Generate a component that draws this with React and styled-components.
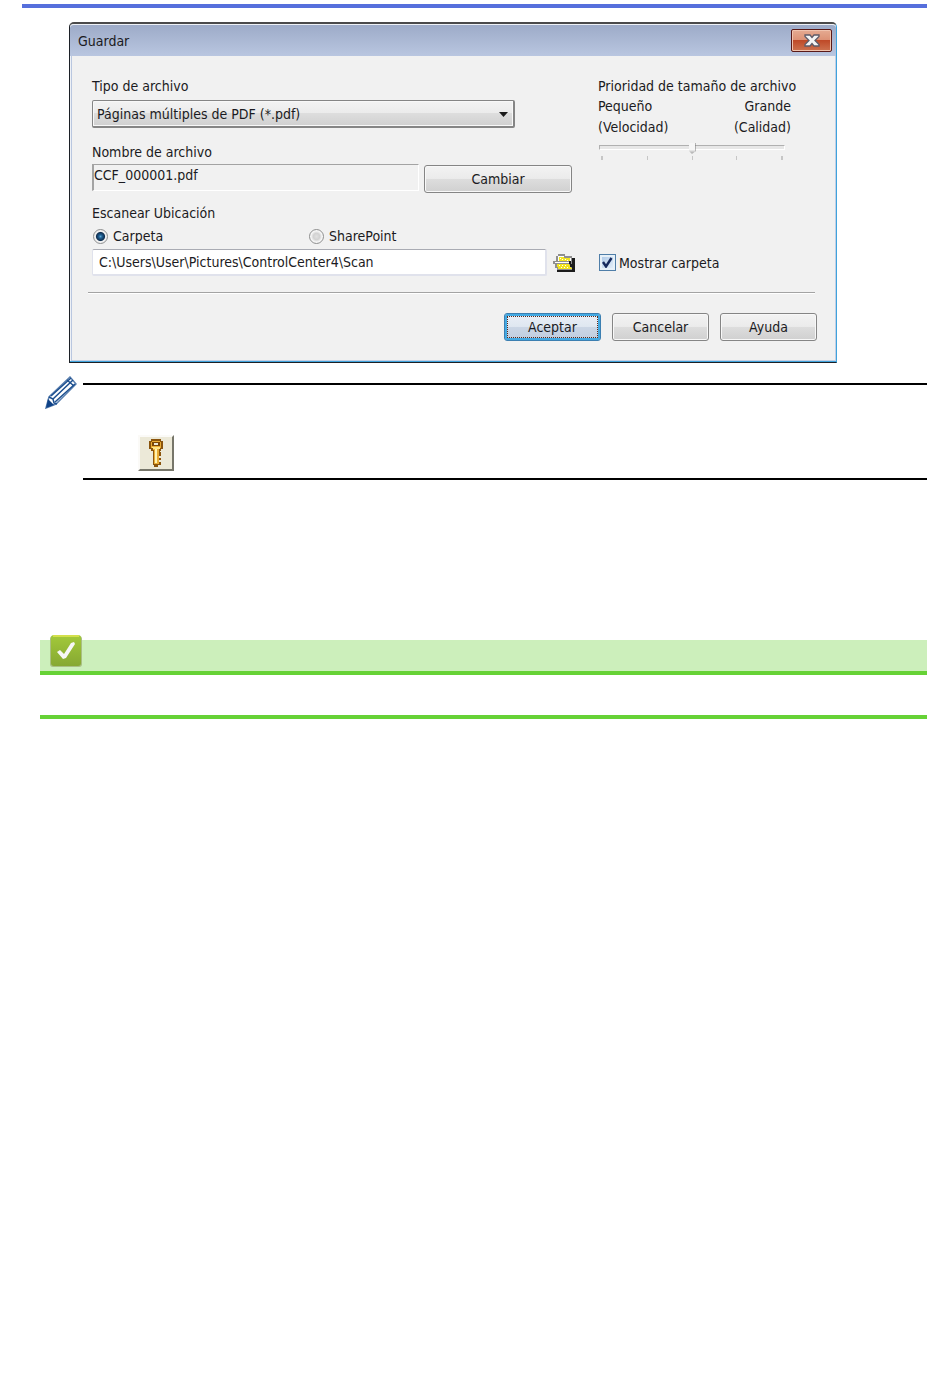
import React, { useState } from 'react';
import styled, { createGlobalStyle } from 'styled-components';

const GlobalStyle=createGlobalStyle`
    *{
        box-sizing:border-box;
    }
    body{
        margin:0;
        background:#ffffff;
        color:#1b1b22;
        font-family:Tahoma,"DejaVu Sans Condensed","DejaVu Sans",sans-serif;
        font-size:14px;
        line-height:20px;
    }
    button,input,select{
        font:inherit;
        color:inherit;
        margin:0;
    }
`;

const Page=styled.main`
    padding:4px 23px 40px 22px;
`;

const TopRule=styled.hr`
    height:4px;
    margin:0 0 14px;
    border:none;
    background:#566fdc;
`;

const Dialog=styled.section`
    max-width:768px;
    margin-left:47px;
    border:1px solid #1c2026;
    border-top:2px solid #4a4a4a;
    border-right:1px solid #3fa3dc;
    border-radius:5px 5px 0 0;
    background:#f1f1f1;
    box-shadow:inset 0 -1px 0 #3fa3dc,inset 1px 0 0 #eef1f6,inset -1px 0 0 #c3cfe4,inset 2px 0 0 #b9c7e0,inset 0 -2px 0 #c3cfe4;
`;

const TitleBar=styled.header`
    display:flex;
    align-items:flex-start;
    justify-content:space-between;
    height:32px;
    padding:4px 4px 0 8px;
    border-top:1px solid #eef1f6;
    border-radius:4px 4px 0 0;
    background:linear-gradient(#9dabc8,#b9c6e0);
`;

const Title=styled.h1`
    margin:2px 0 0;
    font-size:14px;
    font-weight:400;
    line-height:20px;
`;

const CloseButton=styled.button`
    display:grid;
    place-items:center;
    width:41px;
    height:23px;
    padding:0;
    border:1px solid #5a1a18;
    border-radius:2px;
    background:linear-gradient(#e5ab92,#dc9175 48%,#bf4a28 50%,#cd7350);
    box-shadow:inset 0 0 0 1px #f0c3ae;
`;

const Body=styled.form`
    padding:20px 19px 21px 22px;
`;

const Columns=styled.div`
    display:grid;
    grid-template-columns:506px 1fr;
`;

const Fields=styled.div`
    display:flex;
    flex-direction:column;
`;

const Label=styled.label`
    display:block;
    margin-top:${(props)=>props.$gap||0}px;
`;

const SelectWrap=styled.div`
    display:grid;
    align-items:center;
    width:423px;
    margin-top:4px;
    > *{
        grid-area:1/1;
    }
    svg{
        justify-self:end;
        margin-right:7px;
        pointer-events:none;
    }
`;

const Select=styled.select`
    appearance:none;
    width:100%;
    height:28px;
    padding:0 24px 0 4px;
    border:1px solid #858585;
    border-bottom-width:2px;
    border-right-width:2px;
    border-radius:2px;
    background:linear-gradient(#f3f3f3,#ebebeb 48%,#dddddd 50%,#d0d0d0);
    box-shadow:inset 0 0 0 1px #f8f8f8;
`;

const Row=styled.div`
    display:flex;
    align-items:${(props)=>props.$align||'center'};
    margin-top:${(props)=>props.$gap||0}px;
`;

const FileName=styled.input`
    width:327px;
    height:27px;
    margin-right:5px;
    padding:0 0 6px 0;
    border:1px solid #ffffff;
    border-top-color:#a3a3a3;
    border-left:2px solid #a3a3a3;
    background:#f1f1f1;
`;

const FileRow=styled(Row)`
    height:29px;
    button{
        align-self:flex-end;
    }
`;

const Button=styled.button`
    width:${(props)=>props.$wide?148:97}px;
    height:28px;
    padding:0;
    border:1px solid #858585;
    border-radius:3px;
    background:linear-gradient(#f3f3f3,#ebebeb 48%,#dddddd 50%,#d0d0d0);
    box-shadow:inset 0 0 0 1px #f8f8f8;
    ${(props)=>props.$primary&&`
        border-color:#3c7fb1;
        background:linear-gradient(#eaeff6,#dfe7f1 48%,#cbd6e5 50%,#c0cddf);
        box-shadow:inset 0 0 0 2px #43a9e2;
        outline:1px dotted #5c2a1c;
        outline-offset:-4px;
    `}
`;

const Choice=styled.label`
    display:flex;
    align-items:center;
    gap:5px;
    width:${(props)=>props.$width}px;
    padding-left:1px;
`;

const Radio=styled.input`
    appearance:none;
    width:15px;
    height:15px;
    border:1px solid #8e8f8f;
    border-radius:50%;
    background:radial-gradient(circle,#e0e0e0 0,#d2d2d2 35%,#f6f6f6 60%);
    &:checked{
        background:radial-gradient(circle at 50% 50%,#5fa8d2 0,#1f5f93 18%,#0f2f50 44%,#f1f1f1 55%);
    }
`;

const PathInput=styled.input`
    width:455px;
    height:27px;
    padding:0 6px;
    border:1px solid #e0e2ec;
    border-top-color:#a9abb3;
    border-bottom-width:2px;
    border-right-width:2px;
    border-radius:2px;
    background:#ffffff;
`;

const FolderButton=styled.button`
    display:flex;
    width:23px;
    height:20px;
    margin:0 23px 0 6px;
    padding:0;
    border:none;
    background:none;
`;

const CheckLabel=styled.label`
    display:flex;
    align-items:center;
    gap:3px;
`;

const CheckWrap=styled.span`
    display:grid;
    place-items:center;
    > *{
        grid-area:1/1;
    }
    svg{
        pointer-events:none;
    }
`;

const Checkbox=styled.input`
    appearance:none;
    width:17px;
    height:17px;
    border:1px solid #4f7ea8;
    background:linear-gradient(135deg,#a9c6e6,#e9f2fb);
    box-shadow:inset 0 0 0 2px #e6f0f8;
`;

const Priority=styled.div`
    display:flex;
    flex-direction:column;
`;

const Ends=styled.div`
    display:flex;
    justify-content:space-between;
    width:193px;
    line-height:21px;
    div:last-child{
        text-align:right;
    }
`;

const Slider=styled.input`
    appearance:none;
    width:186px;
    height:12px;
    margin:3px 0 3px 1px;
    background:none;
    &::-webkit-slider-runnable-track{
        height:5px;
        border:1px solid #ffffff;
        border-top-color:#b0b0b0;
        border-left-color:#b0b0b0;
        background:#e7e7e7;
    }
    &::-webkit-slider-thumb{
        appearance:none;
        width:7px;
        height:11px;
        margin-top:-3px;
        border-right:1px solid #777777;
        background:linear-gradient(#f6f6f6 60%,#9a9a9a);
        clip-path:polygon(0 0,100% 0,100% 80%,60% 100%,40% 100%,0 70%);
    }
`;

const Ticks=styled.div`
    display:flex;
    justify-content:space-between;
    width:182px;
    margin-left:3px;
`;

const Tick=styled.span`
    width:${(props)=>props.$end?2:1}px;
    height:4px;
    background:#c6c6c6;
`;

const Divider=styled.hr`
    height:2px;
    margin:16px 2px 19px -4px;
    border:none;
    border-top:1px solid #a3a3a3;
    border-bottom:1px solid #ffffff;
`;

const Actions=styled.div`
    display:flex;
    justify-content:flex-end;
    gap:11px;
`;

const Note=styled.aside`
    display:flex;
    align-items:flex-start;
    gap:6px;
    margin:13px 0 0 23px;
`;

const NoteBody=styled.div`
    flex:1;
    margin-top:7px;
    padding:50px 0 7px 55px;
    border-top:2px solid #000000;
    border-bottom:2px solid #000000;
`;

const KeyTile=styled.div`
    display:grid;
    place-items:center;
    width:36px;
    height:36px;
    border:2px solid #fbfaf7;
    border-right-color:#77766a;
    border-bottom-color:#77766a;
    background:#ece9d8;
`;

const Related=styled.section`
    margin:160px 0 0 18px;
    border-bottom:4px solid #66d236;
`;

const RelatedHead=styled.div`
    height:35px;
    margin-bottom:40px;
    padding-left:10px;
    border-bottom:4px solid #66d236;
    background:#ccefbb;
    svg{
        display:block;
        position:relative;
        top:-5px;
    }
`;

const CloseIcon=()=>(
    <svg width="16" height="13" viewBox="0 0 16 13" aria-hidden="true">
        <path d="M1 1h5l2 2.500 2-2.500h5v1.500L11 6.500l4 4V12h-5L8 9.500 6 12H1v-1.500l4-4-4-4z" fill="#f4f4f4" stroke="#5d5b68" strokeWidth="1.300"/>
    </svg>
);

const FolderIcon=()=>(
    <svg width="23" height="20" viewBox="0 0 23 20" shapeRendering="crispEdges" aria-hidden="true">
        <path d="M19 5h3v14H4v-2h15z" fill="#1c1c1c"/>
        <path d="M5 1h7v2h7v14H4v-2H2v-4H0V8h3V3h2z" fill="#8f8f8f"/>
        <path d="M5 3h6v2h7v3H5z" fill="#ffffff"/>
        <path d="M6 4h5v1h6v3H6z" fill="#f2e41f"/>
        <path d="M2 9h14v1H2z" fill="#ffffff"/>
        <path d="M4 11h12l3 5H5v-2H4z" fill="#f2e41f"/>
        <path d="M7 5h1v1H7zM9 6h1v1H9zM12 6h1v1h-1zM14 7h1v1h-1zM6 12h1v1H6zM9 12h1v1H9zM12 12h1v1h-1zM8 14h1v1H8zM11 14h1v1h-1zM14 14h1v1h-1z" fill="#ffffff"/>
        <path d="M16 8h2v3h1v3h-2v-3h-1z" fill="#1c1c1c"/>
    </svg>
);

const PencilIcon=()=>(
    <svg width="32" height="33" viewBox="0 0 32 33" aria-hidden="true">
        <path d="M1 32l3-11L25 1l6 7-20 20z" fill="#ffffff" stroke="#5c81b0" strokeWidth="1.500"/>
        <path d="M4 21l4 2 1 4 3 1M8 23L28 4M10 26L30 8M22 4l7 6M6 20L26 2" fill="none" stroke="#1c4f8f" strokeWidth="1.500"/>
        <path d="M1 32l2-9 6 6z" fill="#0f4287"/>
    </svg>
);

const KeyIcon=()=>(
    <svg width="14" height="28" viewBox="0 0 14 28" shapeRendering="crispEdges" aria-hidden="true">
        <path d="M2 0h10v2h2v8h-2v2h-1v1h1v4h-2v2h2v2h-2v2h2v3h-3v2H5v-2H4V12H2v-2H0V2h2z" fill="#8a540c"/>
        <path d="M3 2h8v1h1v6h-2v2H4V9H2V3h1z" fill="#e9ac35"/>
        <path d="M3 3h8v4H3z" fill="#7b4708"/>
        <path d="M5 4h4v2H5z" fill="#ece9d8"/>
        <path d="M3 8h8v2H4z" fill="#ffe486"/>
        <path d="M5 10h5v15H5z" fill="#e9ac35"/>
        <path d="M6 10h2v14H6z" fill="#fff2b0"/>
    </svg>
);

const CheckBadge=()=>(
    <svg width="32" height="32" viewBox="0 0 32 32" aria-hidden="true">
        <defs>
            <linearGradient id="badge" x1="0" y1="0" x2="0" y2="1">
                <stop offset="0" stopColor="#a3c93a"/>
                <stop offset="1" stopColor="#86a832"/>
            </linearGradient>
        </defs>
        <rect x="0" y="1" width="32" height="31" rx="3" fill="#a9bf83"/>
        <rect x="1" y="0" width="30" height="31" rx="3" fill="url(#badge)"/>
        <path d="M3 1h26" stroke="#d3e04c" strokeWidth="2"/>
        <path d="M7 17l3-2 4 4 7-11 3-1 1 2-9 14-3 1z" fill="#f7f7f5"/>
    </svg>
);

const App=()=> {

    const [place,setPlace] = useState('folder');
    const [showFolder,setShowFolder] = useState(true);

    return (
        <Page>
            <GlobalStyle/>
            <TopRule/>
            <Dialog aria-label="Guardar">
                <TitleBar>
                    <Title>Guardar</Title>
                    <CloseButton type="button" aria-label="Cerrar"><CloseIcon/></CloseButton>
                </TitleBar>
                <Body onSubmit={(e)=>e.preventDefault()}>
                    <Columns>
                        <Fields>
                            <Label htmlFor="type">Tipo de archivo</Label>
                            <SelectWrap>
                                <Select id="type">
                                    <option>Páginas múltiples de PDF (*.pdf)</option>
                                </Select>
                                <svg width="9" height="5" viewBox="0 0 9 5" aria-hidden="true"><path d="M0 0h9L4.500 5z" fill="#1b1b1b"/></svg>
                            </SelectWrap>
                            <Label htmlFor="name" $gap={14}>Nombre de archivo</Label>
                            <FileRow $gap={2} $align="flex-start">
                                <FileName id="name" readOnly value="CCF_000001.pdf"/>
                                <Button type="button" $wide>Cambiar</Button>
                            </FileRow>
                            <Label as="div" $gap={10}>Escanear Ubicación</Label>
                            <Row $gap={3}>
                                <Choice $width={216}>
                                    <Radio type="radio" name="place" checked={place==='folder'} onChange={()=>setPlace('folder')}/>
                                    Carpeta
                                </Choice>
                                <Choice>
                                    <Radio type="radio" name="place" checked={place==='sharepoint'} onChange={()=>setPlace('sharepoint')}/>
                                    SharePoint
                                </Choice>
                            </Row>
                        </Fields>
                        <Priority>
                            <Label htmlFor="priority">Prioridad de tamaño de archivo</Label>
                            <Ends>
                                <div>Pequeño<br/>(Velocidad)</div>
                                <div>Grande<br/>(Calidad)</div>
                            </Ends>
                            <Slider id="priority" type="range" min="1" max="5" defaultValue="3"/>
                            <Ticks>
                                <Tick $end/><Tick/><Tick/><Tick/><Tick $end/>
                            </Ticks>
                        </Priority>
                    </Columns>
                    <Row $gap={3}>
                        <PathInput aria-label="Carpeta" defaultValue="C:\Users\User\Pictures\ControlCenter4\Scan"/>
                        <FolderButton type="button" aria-label="Examinar"><FolderIcon/></FolderButton>
                        <CheckLabel>
                            <CheckWrap>
                                <Checkbox type="checkbox" checked={showFolder} onChange={()=>setShowFolder(!showFolder)}/>
                                {showFolder&&<svg width="11" height="11" viewBox="0 0 11 11" aria-hidden="true"><path d="M1 5l3 4.500L9.500 1" fill="none" stroke="#14285c" strokeWidth="2.400"/></svg>}
                            </CheckWrap>
                            Mostrar carpeta
                        </CheckLabel>
                    </Row>
                    <Divider/>
                    <Actions>
                        <Button $primary>Aceptar</Button>
                        <Button type="button">Cancelar</Button>
                        <Button type="button">Ayuda</Button>
                    </Actions>
                </Body>
            </Dialog>
            <Note>
                <PencilIcon/>
                <NoteBody>
                    <KeyTile><KeyIcon/></KeyTile>
                </NoteBody>
            </Note>
            <Related>
                <RelatedHead><CheckBadge/></RelatedHead>
            </Related>
        </Page>
    );
}

export default App;
